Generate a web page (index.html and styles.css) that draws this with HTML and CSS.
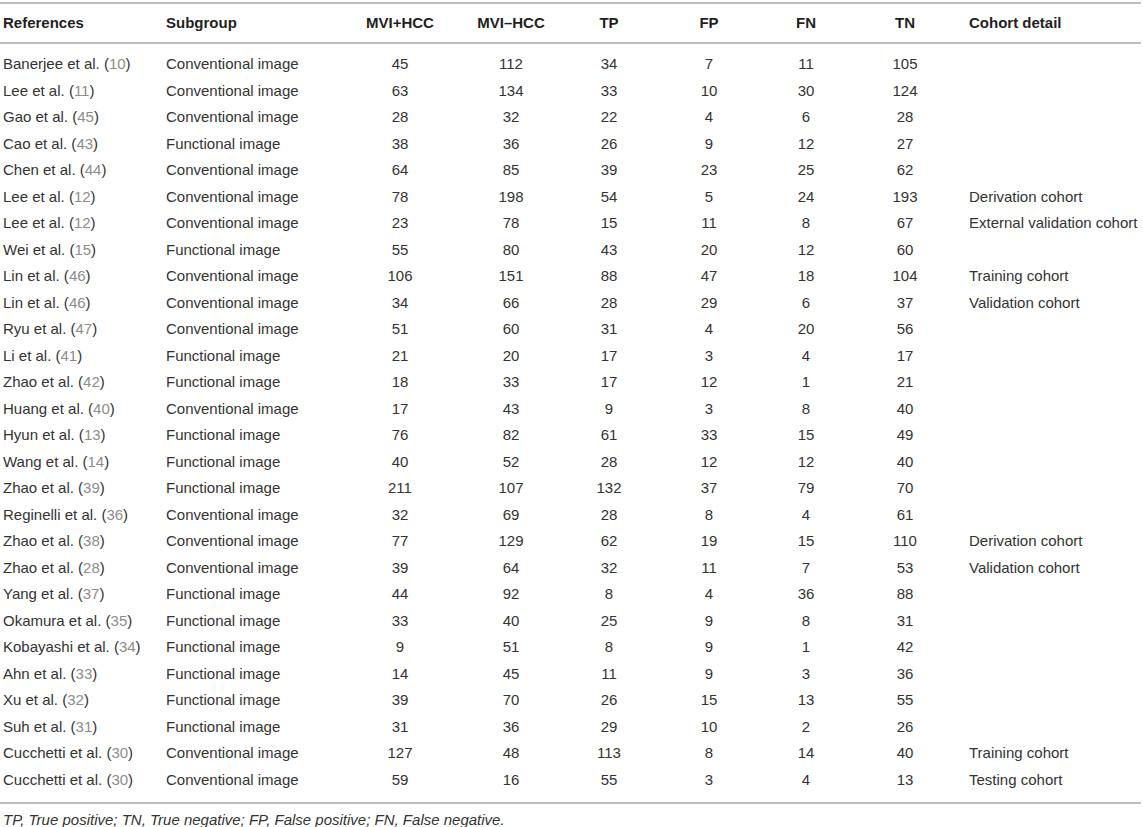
FILE: index.html
```html
<!DOCTYPE html>
<html>
<head>
<meta charset="utf-8">
<link rel="stylesheet" href="styles.css">
</head>
<body>
<table class="data">
<colgroup>
<col class="c-ref"><col class="c-sub"><col class="c-pos"><col class="c-neg"><col class="c-tp"><col class="c-fp"><col class="c-fn"><col class="c-tn"><col class="c-co">
</colgroup>
<thead>
<tr><th class="l">References</th><th class="l">Subgroup</th><th>MVI+HCC</th><th>MVI–HCC</th><th>TP</th><th>FP</th><th>FN</th><th>TN</th><th class="l co">Cohort detail</th></tr>
</thead>
<tbody>
<tr><td class="l">Banerjee et al. (<span class="ref">10</span>)</td><td class="l">Conventional image</td><td>45</td><td>112</td><td>34</td><td>7</td><td>11</td><td>105</td><td class="l co"></td></tr>
<tr><td class="l">Lee et al. (<span class="ref">11</span>)</td><td class="l">Conventional image</td><td>63</td><td>134</td><td>33</td><td>10</td><td>30</td><td>124</td><td class="l co"></td></tr>
<tr><td class="l">Gao et al. (<span class="ref">45</span>)</td><td class="l">Conventional image</td><td>28</td><td>32</td><td>22</td><td>4</td><td>6</td><td>28</td><td class="l co"></td></tr>
<tr><td class="l">Cao et al. (<span class="ref">43</span>)</td><td class="l">Functional image</td><td>38</td><td>36</td><td>26</td><td>9</td><td>12</td><td>27</td><td class="l co"></td></tr>
<tr><td class="l">Chen et al. (<span class="ref">44</span>)</td><td class="l">Conventional image</td><td>64</td><td>85</td><td>39</td><td>23</td><td>25</td><td>62</td><td class="l co"></td></tr>
<tr><td class="l">Lee et al. (<span class="ref">12</span>)</td><td class="l">Conventional image</td><td>78</td><td>198</td><td>54</td><td>5</td><td>24</td><td>193</td><td class="l co">Derivation cohort</td></tr>
<tr><td class="l">Lee et al. (<span class="ref">12</span>)</td><td class="l">Conventional image</td><td>23</td><td>78</td><td>15</td><td>11</td><td>8</td><td>67</td><td class="l co">External validation cohort</td></tr>
<tr><td class="l">Wei et al. (<span class="ref">15</span>)</td><td class="l">Functional image</td><td>55</td><td>80</td><td>43</td><td>20</td><td>12</td><td>60</td><td class="l co"></td></tr>
<tr><td class="l">Lin et al. (<span class="ref">46</span>)</td><td class="l">Conventional image</td><td>106</td><td>151</td><td>88</td><td>47</td><td>18</td><td>104</td><td class="l co">Training cohort</td></tr>
<tr><td class="l">Lin et al. (<span class="ref">46</span>)</td><td class="l">Conventional image</td><td>34</td><td>66</td><td>28</td><td>29</td><td>6</td><td>37</td><td class="l co">Validation cohort</td></tr>
<tr><td class="l">Ryu et al. (<span class="ref">47</span>)</td><td class="l">Conventional image</td><td>51</td><td>60</td><td>31</td><td>4</td><td>20</td><td>56</td><td class="l co"></td></tr>
<tr><td class="l">Li et al. (<span class="ref">41</span>)</td><td class="l">Functional image</td><td>21</td><td>20</td><td>17</td><td>3</td><td>4</td><td>17</td><td class="l co"></td></tr>
<tr><td class="l">Zhao et al. (<span class="ref">42</span>)</td><td class="l">Functional image</td><td>18</td><td>33</td><td>17</td><td>12</td><td>1</td><td>21</td><td class="l co"></td></tr>
<tr><td class="l">Huang et al. (<span class="ref">40</span>)</td><td class="l">Conventional image</td><td>17</td><td>43</td><td>9</td><td>3</td><td>8</td><td>40</td><td class="l co"></td></tr>
<tr><td class="l">Hyun et al. (<span class="ref">13</span>)</td><td class="l">Functional image</td><td>76</td><td>82</td><td>61</td><td>33</td><td>15</td><td>49</td><td class="l co"></td></tr>
<tr><td class="l">Wang et al. (<span class="ref">14</span>)</td><td class="l">Functional image</td><td>40</td><td>52</td><td>28</td><td>12</td><td>12</td><td>40</td><td class="l co"></td></tr>
<tr><td class="l">Zhao et al. (<span class="ref">39</span>)</td><td class="l">Functional image</td><td>211</td><td>107</td><td>132</td><td>37</td><td>79</td><td>70</td><td class="l co"></td></tr>
<tr><td class="l">Reginelli et al. (<span class="ref">36</span>)</td><td class="l">Conventional image</td><td>32</td><td>69</td><td>28</td><td>8</td><td>4</td><td>61</td><td class="l co"></td></tr>
<tr><td class="l">Zhao et al. (<span class="ref">38</span>)</td><td class="l">Conventional image</td><td>77</td><td>129</td><td>62</td><td>19</td><td>15</td><td>110</td><td class="l co">Derivation cohort</td></tr>
<tr><td class="l">Zhao et al. (<span class="ref">28</span>)</td><td class="l">Conventional image</td><td>39</td><td>64</td><td>32</td><td>11</td><td>7</td><td>53</td><td class="l co">Validation cohort</td></tr>
<tr><td class="l">Yang et al. (<span class="ref">37</span>)</td><td class="l">Functional image</td><td>44</td><td>92</td><td>8</td><td>4</td><td>36</td><td>88</td><td class="l co"></td></tr>
<tr><td class="l">Okamura et al. (<span class="ref">35</span>)</td><td class="l">Functional image</td><td>33</td><td>40</td><td>25</td><td>9</td><td>8</td><td>31</td><td class="l co"></td></tr>
<tr><td class="l">Kobayashi et al. (<span class="ref">34</span>)</td><td class="l">Functional image</td><td>9</td><td>51</td><td>8</td><td>9</td><td>1</td><td>42</td><td class="l co"></td></tr>
<tr><td class="l">Ahn et al. (<span class="ref">33</span>)</td><td class="l">Functional image</td><td>14</td><td>45</td><td>11</td><td>9</td><td>3</td><td>36</td><td class="l co"></td></tr>
<tr><td class="l">Xu et al. (<span class="ref">32</span>)</td><td class="l">Functional image</td><td>39</td><td>70</td><td>26</td><td>15</td><td>13</td><td>55</td><td class="l co"></td></tr>
<tr><td class="l">Suh et al. (<span class="ref">31</span>)</td><td class="l">Functional image</td><td>31</td><td>36</td><td>29</td><td>10</td><td>2</td><td>26</td><td class="l co"></td></tr>
<tr><td class="l">Cucchetti et al. (<span class="ref">30</span>)</td><td class="l">Conventional image</td><td>127</td><td>48</td><td>113</td><td>8</td><td>14</td><td>40</td><td class="l co">Training cohort</td></tr>
<tr><td class="l">Cucchetti et al. (<span class="ref">30</span>)</td><td class="l">Conventional image</td><td>59</td><td>16</td><td>55</td><td>3</td><td>4</td><td>13</td><td class="l co">Testing cohort</td></tr>
</tbody>
</table>
<p class="note">TP, True positive; TN, True negative; FP, False positive; FN, False negative.</p>
</body>
</html>
```
FILE: styles.css
```css
html, body {
  margin: 0;
  padding: 0;
  background: #ffffff;
}
body {
  font-family: "Liberation Sans", Arial, sans-serif;
  font-size: 15px;
  color: #333333;
}
.data {
  margin-top: 2px;
  width: 1141px;
  table-layout: fixed;
  border-collapse: collapse;
  border-top: 2px solid #bdbdbd;
  border-bottom: 2px solid #bdbdbd;
}
.c-ref { width: 163px; }
.c-sub { width: 182px; }
.c-pos { width: 110px; }
.c-neg { width: 112px; }
.c-tp { width: 84px; }
.c-fp { width: 116px; }
.c-fn { width: 78px; }
.c-tn { width: 120px; }
.c-co { width: 176px; }
.data th {
  font-weight: bold;
  color: #1f1f1f;
  line-height: 18px;
  padding: 10px 0;
  text-align: center;
  white-space: nowrap;
  border-bottom: 2px solid #bdbdbd;
}
.data td {
  line-height: 18.5px;
  padding: 4px 0;
  text-align: center;
  white-space: nowrap;
}
.data tbody tr:first-child td { padding-top: 11px; }
.data tbody tr:last-child td { padding-bottom: 13px; }
.data .l {
  text-align: left;
  padding-left: 3px;
}
.data .co {
  padding-left: 4px;
}
.ref {
  color: #8c8c8c;
}
.note {
  margin: 7px 0 0 3px;
  font-style: italic;
  line-height: 18px;
  color: #333333;
}
```
